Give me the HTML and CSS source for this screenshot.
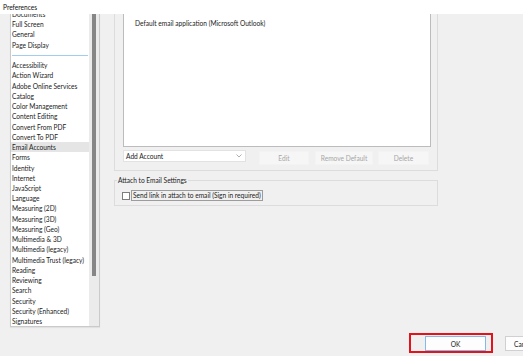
FILE: index.html
```html
<!DOCTYPE html>
<html lang="en">
<head>
  <meta charset="UTF-8" />
  <title>Preferences</title>
  <link rel="stylesheet" href="styles.css">
</head>
<body>
  <div class="titlebar">Preferences</div>

  <div class="content">
    <div class="category-box">
      <ul class="category-list">
        <li>Documents</li>
        <li>Full Screen</li>
        <li>General</li>
        <li>Page Display</li>
        <li class="divider"></li>
        <li>Accessibility</li>
        <li>Action Wizard</li>
        <li>Adobe Online Services</li>
        <li>Catalog</li>
        <li>Color Management</li>
        <li>Content Editing</li>
        <li>Convert From PDF</li>
        <li>Convert To PDF</li>
        <li class="selected">Email Accounts</li>
        <li>Forms</li>
        <li>Identity</li>
        <li>Internet</li>
        <li>JavaScript</li>
        <li>Language</li>
        <li>Measuring (2D)</li>
        <li>Measuring (3D)</li>
        <li>Measuring (Geo)</li>
        <li>Multimedia &amp; 3D</li>
        <li>Multimedia (legacy)</li>
        <li>Multimedia Trust (legacy)</li>
        <li>Reading</li>
        <li>Reviewing</li>
        <li>Search</li>
        <li>Security</li>
        <li>Security (Enhanced)</li>
        <li>Signatures</li>
      </ul>
      <div class="scrollbar"><div class="thumb"></div></div>
    </div>

    <div class="panel">
      <div class="group accounts">
        <div class="account-list">
          <div class="account-row">Default email application (Microsoft Outlook)</div>
        </div>
        <div class="account-controls">
          <div class="select">
            <span>Add Account</span>
            <svg class="chevron" width="6" height="4" viewBox="0 0 6 4"><path d="M0.5 0.5 L3 3 L5.5 0.5" fill="none" stroke="#9a9a9a" stroke-width="0.8"/></svg>
          </div>
          <button class="btn btn-edit" disabled>Edit</button>
          <button class="btn btn-remove" disabled>Remove Default</button>
          <button class="btn btn-delete" disabled>Delete</button>
        </div>
      </div>

      <fieldset class="group attach">
        <legend>Attach to Email Settings</legend>
        <label class="check">
          <span class="box"></span>
          <span class="focus">Send link in attach to email (Sign in required)</span>
        </label>
      </fieldset>
    </div>
  </div>

  <div class="footer">
    <div class="highlight">
      <button class="dlg-btn ok">OK</button>
    </div>
    <button class="dlg-btn cancel">Cancel</button>
  </div>
</body>
</html>
```

FILE: styles.css
```css
* {
  box-sizing: border-box;
}

html, body {
  margin: 0;
  padding: 0;
}

body {
  width: 523px;
  height: 356px;
  overflow: hidden;
  background-color: #f0f0f0;
  font-family: Lato, 'Noto Sans', sans-serif;
  font-size: 6.6px;
  color: #1b1b1b;
}

.titlebar {
  position: relative;
  z-index: 1;
  height: 14px;
  line-height: 14px;
  padding-left: 3px;
  background: #ffffff;
  color: #111;
}

.content {
  display: flex;
  align-items: flex-start;
  height: 319px;
  padding-left: 10px;
}

/* left category list */
.category-box {
  display: flex;
  width: 90px;
  height: 313px;
  background: #ffffff;
  border: 1px solid #cacaca;
  border-top: none;
  box-shadow: 0 1px 1px rgba(0, 0, 0, 0.06);
  overflow: hidden;
}

.category-list {
  flex: 1;
  list-style: none;
  margin: -5px 0 0 0;
  padding: 0;
}

.category-list li {
  height: 10.24px;
  line-height: 10.24px;
  padding-left: 1px;
  white-space: nowrap;
}

.category-list li.selected {
  background: #e5e5e5;
}

.category-list li.divider {
  display: flex;
  align-items: center;
  padding: 0 1px 0 1px;
}

.category-list li.divider::after {
  content: "";
  flex: 1;
  height: 1px;
  background: #a2cdee;
}

.scrollbar {
  width: 10px;
  background: #ebebeb;
}

.thumb {
  width: 4px;
  height: 262px;
  margin-left: 3px;
  background: #868686;
}

/* right panel */
.panel {
  width: 324px;
  margin-left: 14px;
}

.group {
  border: 1px solid #dcdcdc;
}

.accounts {
  border-top: none;
  padding: 0 6px 5px 8px;
}

.account-list {
  height: 133px;
  background: #ffffff;
  border: 1px solid #bcbcbc;
  border-top: none;
  padding: 4px 0 0 11px;
}

.account-row {
  line-height: 10px;
}

.account-controls {
  display: flex;
  align-items: flex-start;
  margin-top: 3px;
}

.select {
  display: flex;
  align-items: center;
  justify-content: space-between;
  width: 123px;
  height: 12px;
  padding: 0 3px 0 2px;
  background: #ffffff;
  border: 1px solid #e2e2e2;
}

.btn {
  height: 14px;
  margin-top: 1px;
  padding: 0;
  font: inherit;
  color: #a6a6a6;
  background: #f6f6f6;
  border: 1px solid #f3f3f3;
}

.btn-edit {
  width: 50px;
  margin-left: 13px;
}

.btn-remove {
  width: 58px;
  margin-left: 6px;
}

.btn-delete {
  width: 51px;
  margin-left: 5px;
}

.attach {
  min-width: 0;
  margin: 5px 0 0 0;
  padding: 6px 7px 4px 7px;
}

.attach legend {
  padding: 0 1px;
  margin-left: -5px;
  line-height: 8px;
}

.check {
  display: flex;
  align-items: center;
  height: 11px;
}

.box {
  width: 8px;
  height: 8px;
  margin-right: 1px;
  background: #ffffff;
  border: 1px solid #7d7d7d;
}

.focus {
  height: 11px;
  line-height: 9px;
  padding: 0 1px;
  border: 1px solid #9c9c9c;
}

/* bottom buttons */
.footer {
  display: flex;
  align-items: flex-start;
  padding-left: 409px;
  overflow: hidden;
}

.highlight {
  flex-shrink: 0;
  padding: 1px 5px 0 14px;
  border: 2px solid #e3131d;
}

.dlg-btn {
  width: 61px;
  height: 15px;
  padding: 0;
  font: inherit;
  color: #1b1b1b;
  background: #fdfdfd;
  border: 1px solid #d0d0d0;
}

.dlg-btn.ok {
  border-color: #86b8e8;
}

.dlg-btn.cancel {
  flex-shrink: 0;
  margin: 3px 0 0 12px;
  text-align: left;
  padding-left: 8px;
}
```
